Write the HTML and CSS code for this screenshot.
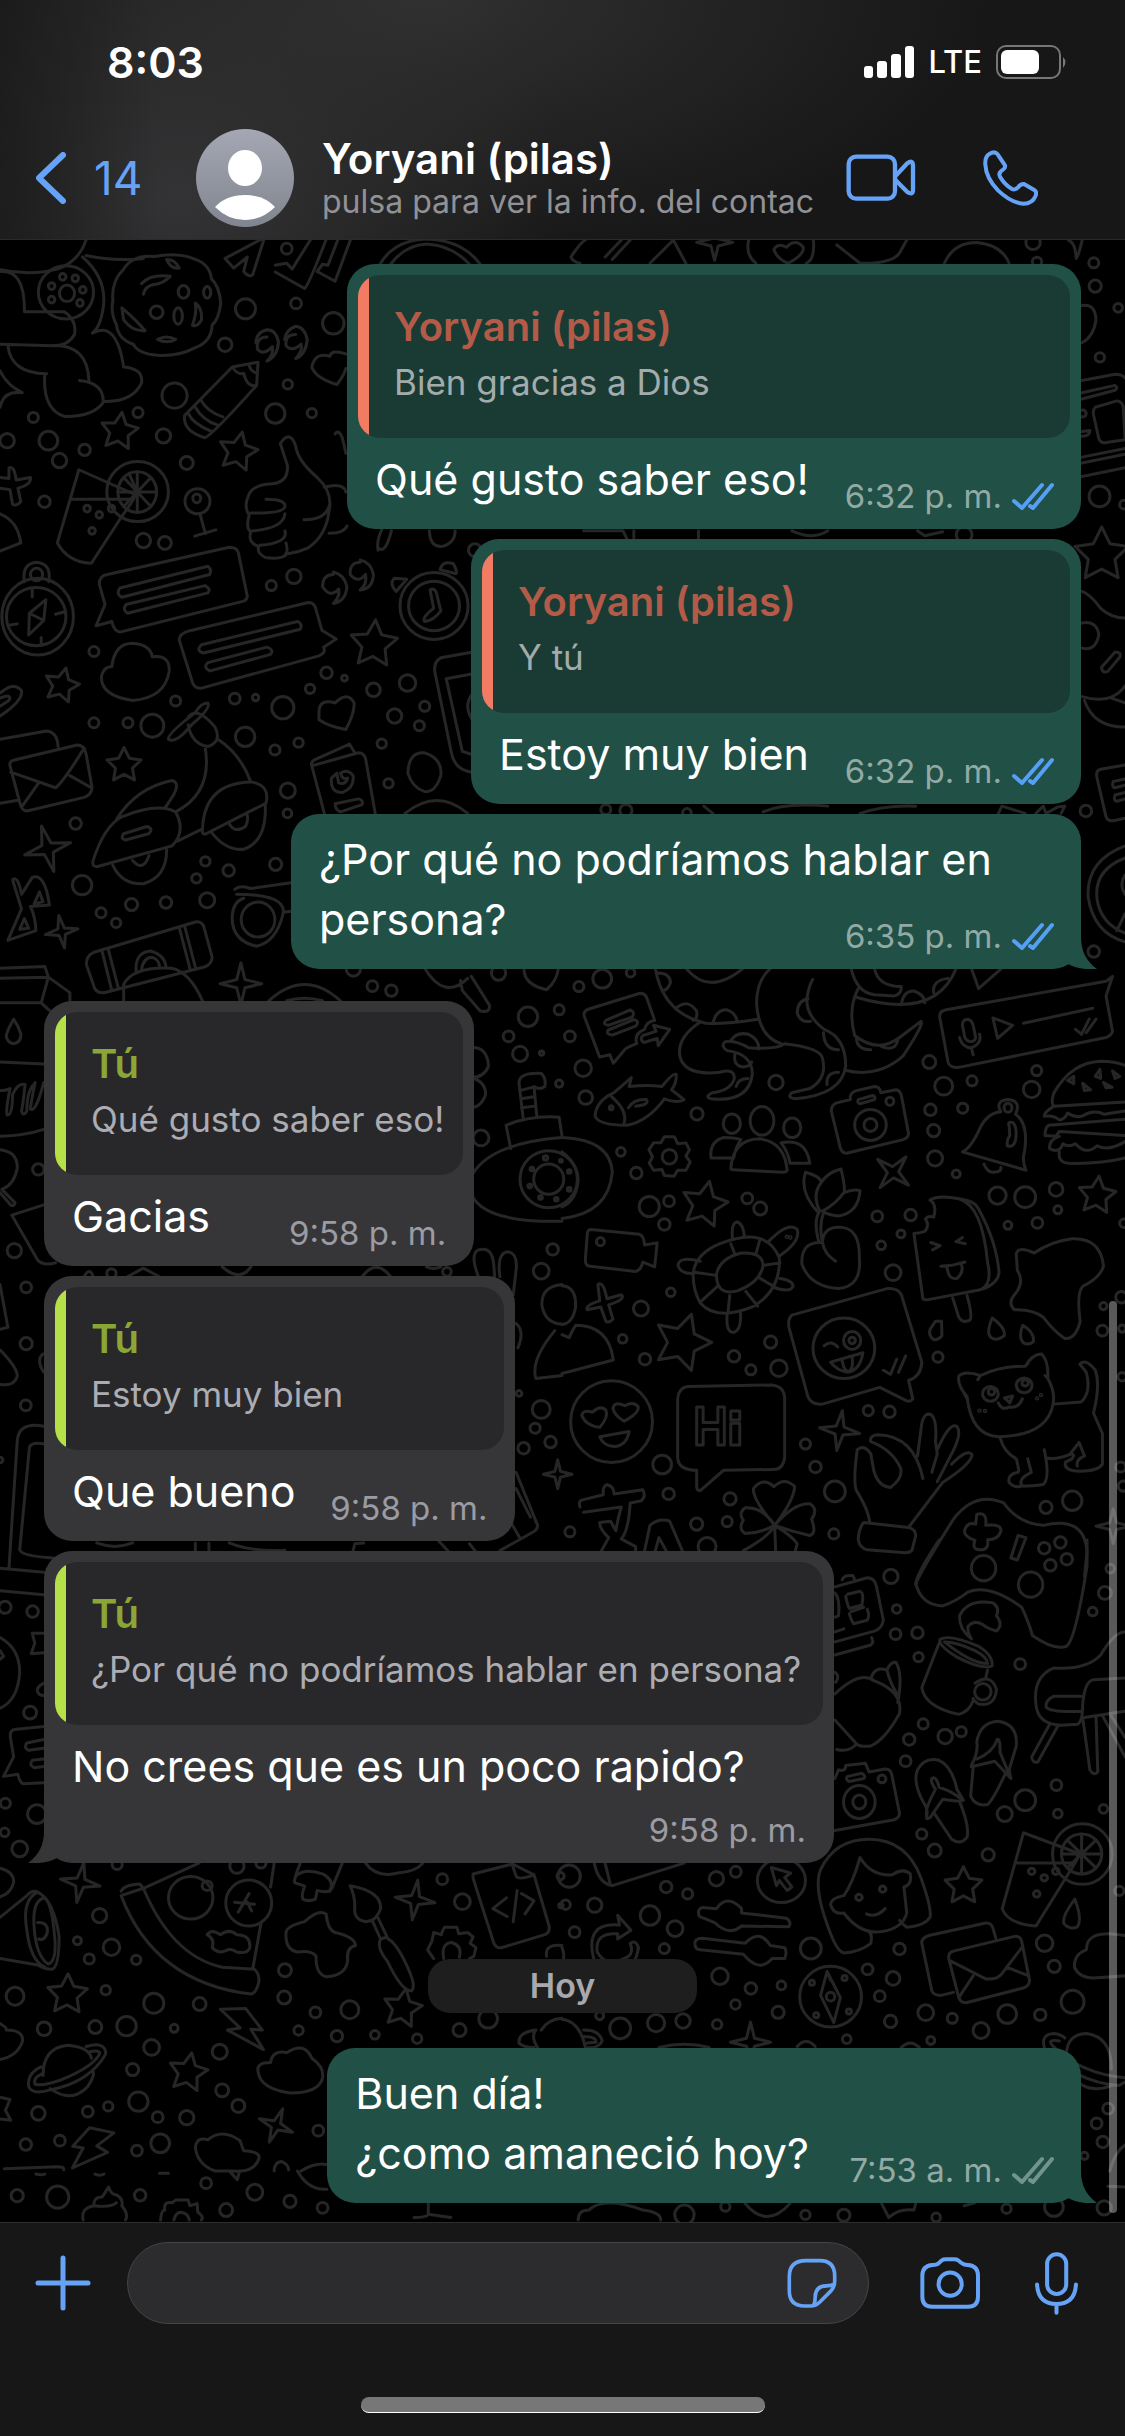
FILE: index.html
```html
<!DOCTYPE html>
<html lang="es">
<head>
<meta charset="utf-8">
<meta name="viewport" content="width=device-width, initial-scale=1">
<title>Chat</title>
<link rel="stylesheet" href="styles.css">
</head>
<body>
<svg class="defs" aria-hidden="true">
  <symbol id="ticks" viewBox="0 0 42 28"><path d="M2 19l8 7L30 3M18 24l3 2L40 3" fill="none" stroke="currentColor" stroke-width="4" stroke-linecap="round" stroke-linejoin="round"/></symbol>
  <symbol id="tail" viewBox="0 0 32 32"><path d="M0 0H16C16 14 21 24 32 32C20 33 10 31 3 27L0 20Z" fill="currentColor"/></symbol>
</svg>

<header class="top">
  <div class="status">
    <span class="clock">8:03</span>
    <div class="status-icons">
      <svg width="50" height="32" viewBox="0 0 50 32" fill="#fff"><rect y="20" width="9" height="12" rx="3"/><rect x="13" y="15" width="10" height="17" rx="3"/><rect x="27" y="8" width="10" height="24" rx="3"/><rect x="41" width="9" height="32" rx="3"/></svg>
      <span class="carrier">LTE</span>
      <svg width="72" height="34" viewBox="0 0 72 34"><rect x="1" y="1" width="63" height="32" rx="9" fill="none" stroke="#777" stroke-width="2"/><rect x="5" y="5" width="38" height="24" rx="6" fill="#fff"/><path d="M67 12q5 5 0 11z" fill="#777"/></svg>
    </div>
  </div>
  <nav class="nav">
    <button class="back" aria-label="Volver a chats">
      <svg width="30" height="52" viewBox="0 0 30 52"><path d="M27 3L3 26L27 49" fill="none" stroke="currentColor" stroke-width="6" stroke-linecap="round" stroke-linejoin="round"/></svg>
      <span>14</span>
    </button>
    <svg class="avatar" viewBox="0 0 98 98"><defs><linearGradient id="av" x2="0" y2="1"><stop stop-color="#a5a8b4"/><stop offset="1" stop-color="#81858f"/></linearGradient></defs><circle cx="49" cy="49" r="49" fill="url(#av)"/><ellipse cx="49" cy="39" rx="17" ry="18" fill="#fff"/><path d="M19 78Q30 66 49 66T79 78Q66 91 49 91T19 78Z" fill="#fff"/></svg>
    <div class="who">
      <h1 class="name">Yoryani (pilas)</h1>
      <p class="hint">pulsa para ver la info. del contac</p>
    </div>
    <div class="calls">
      <button aria-label="Videollamada"><svg width="70" height="48" viewBox="63 400 210 142" fill="none" stroke="currentColor" stroke-width="13" stroke-linejoin="round"><rect x="71" y="407" width="139" height="126" rx="22"/><path d="M212 464L247 427Q264 415 264 434V506Q264 524 247 513L212 478"/></svg></button>
      <button aria-label="Llamar"><svg width="55" height="56" viewBox="475 386 165 168" fill="none" stroke="currentColor" stroke-width="12" stroke-linejoin="round"><path d="M482 430Q480 406 494 398Q510 388 519 399L541 432Q543 440 535 445Q520 454 526 466Q540 490 562 503Q571 507 580 498Q588 487 598 488L630 507Q637 512 633 523Q623 547 597 547Q560 545 520 507Q484 470 482 430Z"/></svg></button>
    </div>
  </nav>
</header>

<main class="chat">
  <svg class="wallpaper" viewBox="0 240 1125 1982" preserveAspectRatio="xMidYMin slice" aria-hidden="true">
    <g transform="translate(0 240) scale(.3584 .4847)">
      <path d="M-5 60Q80 75 160 60Q220 45 240 0M240 32Q320 45 400 38M230 35Q300 80 288 140Q280 180 258 192M0 65Q70 60 68 148L180 148Q215 165 208 195Q190 218 150 218L0 215M22 218Q30 275 130 276M145 218Q245 215 248 290M222 290Q290 295 288 335Q260 365 180 364Q118 350 125 276M258 192Q325 165 345 262Q400 265 395 295Q370 335 290 333"/>
      <ellipse cx="184" cy="108" rx="77" ry="55"/><ellipse cx="187" cy="110" rx="21" ry="17"/><ellipse cx="144" cy="95" rx="9" ry="7"/><ellipse cx="175" cy="76" rx="9" ry="7"/><ellipse cx="210" cy="79" rx="9" ry="7"/><ellipse cx="231" cy="103" rx="9" ry="7"/><ellipse cx="223" cy="130" rx="9" ry="7"/><ellipse cx="144" cy="123" rx="9" ry="7"/>
      <path d="M345 60Q370 30 430 34Q500 25 545 40Q585 50 590 80Q612 95 616 130Q610 165 592 175Q590 210 545 222Q500 240 440 238Q385 235 372 215Q330 205 325 175Q308 150 315 125Q310 85 345 60ZM465 40Q490 40 500 58Q475 60 465 40ZM395 90Q420 70 475 75Q455 90 430 92Q405 95 400 112M340 140Q380 165 405 187Q370 190 345 165ZM545 130Q565 140 562 165Q550 180 537 176Q550 150 545 130ZM440 205Q465 195 490 205Q465 215 440 205Z"/>
      <ellipse cx="512" cy="107" rx="15" ry="13"/><ellipse cx="437" cy="149" rx="18" ry="13"/><ellipse cx="497" cy="157" rx="12" ry="17"/><ellipse cx="578" cy="108" rx="10" ry="12"/>
      <path d="M628 38L738 -5L705 72Q695 78 680 65L690 35L652 58ZM768 52L800 48L815 60L870 -5M768 66L850 100Q860 95 912 -5M885 65L935 85L980 -5M885 65L900 50L915 52L945 -5"/>
      <path d="M745 200Q715 200 718 225Q735 240 760 220Q765 235 745 250Q775 240 777 210Q770 185 745 185Q715 190 714 212M825 195Q795 195 798 218Q815 232 840 215Q845 230 825 245Q855 235 857 205Q850 180 825 178Q798 185 794 205"/>
      <path d="M965 235Q925 225 920 240Q880 230 870 262Q880 285 940 298Q960 280 965 265"/>
      <path d="M720 252L648 262L515 362Q510 395 572 408Q595 400 716 300ZM648 262Q665 280 680 275Q690 305 716 300M695 258Q700 272 718 275M560 330Q580 355 622 365M545 345Q565 372 608 382M525 358Q540 380 590 395"/>
      <path d="M220 474L160 625Q190 665 255 667L340 570Q395 515 370 523ZM200 535H370"/><ellipse cx="384" cy="519" rx="86" ry="62"/><ellipse cx="383" cy="520" rx="54" ry="42"/>
      <path d="M383 478V562M329 520H437M345 490L421 550M345 550L421 490M383 520L360 482"/><ellipse cx="243" cy="554" rx="9" ry="7"/><ellipse cx="277" cy="567" rx="9" ry="7"/><ellipse cx="311" cy="554" rx="9" ry="7"/><ellipse cx="257" cy="600" rx="9" ry="7"/>
      <ellipse cx="551" cy="539" rx="35" ry="26"/><ellipse cx="549" cy="533" rx="11" ry="9"/><path d="M558 565L573 606M543 611L602 598"/>
      <path d="M0 490L25 492L25 470Q40 465 45 495L85 490Q88 505 50 512L58 540Q45 550 35 545L28 515L0 512M0 565Q50 580 58 625L0 642M0 345Q10 310 62 315Q20 300 0 270"/>
      <path d="M782 420Q810 390 825 425Q830 455 885 490Q930 520 918 560Q910 610 860 635Q830 645 800 648Q790 660 740 655Q715 645 722 632Q690 625 700 602Q685 595 695 568Q680 550 692 530Q700 505 760 503Q805 500 802 465ZM742 535Q798 535 795 550Q790 565 700 563M795 565Q790 595 705 600M795 600Q805 625 725 630M798 625Q805 645 795 650M848 577Q910 578 920 545M905 510Q960 500 965 520M918 605Q960 605 968 590"/>
      <ellipse cx="105" cy="777" rx="100" ry="79"/><ellipse cx="101" cy="777" rx="83" ry="60"/><path d="M68 705Q60 668 102 665Q145 668 136 705"/><ellipse cx="102" cy="690" rx="17" ry="13"/><path d="M128 742L82 770L80 815L122 785ZM82 770L122 785M90 722V736M155 772L180 767M25 795L48 792M115 820V834"/>
      <path d="M300 690L640 634Q660 634 665 645L690 735Q690 742 680 745L340 808Q320 812 312 787L268 796L293 752L277 710Q277 692 300 690ZM335 718L580 673Q592 680 585 690L340 737Q322 730 335 718ZM352 752L572 713Q590 720 580 728L356 770Q340 763 352 752Z"/>
      <path d="M530 806L860 748Q875 748 880 758L898 805L938 823L903 840Q910 852 890 858L560 925Q545 925 538 915L500 825Q500 812 530 806ZM562 835L830 787Q845 792 838 803L568 852Q545 848 562 835ZM580 872L745 840Q765 845 755 855L586 889Q565 882 580 872Z"/>
      <path d="M312 880Q320 832 370 832Q420 835 425 860Q475 855 472 890Q460 945 370 950Q280 940 283 900Q290 880 312 880Z"/>
      <path d="M930 690Q900 690 900 715Q920 740 945 720Q950 735 930 750Q965 745 968 715Q960 690 930 685M1005 665Q975 665 977 690Q1000 710 1020 690Q1025 710 1005 722Q1040 720 1042 690Q1035 665 1005 660"/>
      <ellipse cx="1211" cy="755" rx="95" ry="69"/><ellipse cx="1211" cy="755" rx="71" ry="51"/><path d="M1200 722Q1215 715 1220 735L1230 765Q1210 785 1185 787Q1175 780 1210 760ZM1105 725Q1085 710 1100 698L1135 700ZM1228 680Q1235 660 1265 668Q1280 690 1270 688Z"/>
      <path d="M1320 850L1230 862Q1210 870 1213 890L1260 1060Q1270 1095 1320 1098M1320 895L1245 905L1290 1055L1320 1062M1320 935Q1290 960 1320 992M890 975Q890 945 935 955Q970 930 988 955Q990 975 965 1010Q920 1005 890 990Z"/>
      <path d="M0 935Q40 910 60 930Q65 950 0 982M0 945Q35 935 25 950L0 962M0 1030L130 1013Q160 1015 162 1045M0 1162L50 1156M40 1073L215 1042Q235 1042 240 1060L257 1130Q255 1145 235 1150L75 1178Q60 1178 55 1160L28 1085Q25 1075 40 1073ZM30 1098L155 1130Q175 1120 235 1048M60 1170L108 1120M255 1130L195 1105"/>
      <path d="M470 1030Q465 1020 545 975Q560 955 580 955Q590 965 535 1000Q490 1040 470 1030ZM525 985Q550 960 600 1005Q620 1035 580 1045Q535 1040 525 1000M572 1045Q595 1140 490 1180M608 1030Q670 1060 698 1115M325 1195Q380 1130 480 1115Q505 1120 480 1150L460 1172M260 1280Q290 1210 340 1190Q440 1160 490 1180Q520 1220 480 1250L275 1292Q255 1295 260 1280ZM345 1225L410 1210Q430 1215 415 1225L350 1238Q335 1235 345 1225ZM495 1240L565 1215Q570 1120 700 1118Q755 1125 742 1162L575 1225Q562 1228 565 1215M590 1222Q630 1260 680 1257Q745 1240 740 1165M640 1205Q655 1225 685 1210Q695 1195 688 1182M315 1290Q340 1330 400 1328Q465 1315 465 1258M370 1280Q400 1305 416 1270"/>
      <path d="M905 1183L870 1085Q865 1075 885 1070L975 1040L990 1058M870 1085L1000 1058Q1015 1058 1020 1070L1047 1183M935 1163L1000 1153Q1015 1155 1010 1165L950 1180Q935 1175 935 1163ZM925 1110Q920 1140 955 1140Q990 1130 985 1105Q970 1090 950 1100Q955 1115 970 1110Q965 1125 945 1120L940 1100ZM1138 1100Q1140 1055 1185 1058Q1235 1070 1230 1105Q1215 1140 1185 1138Q1150 1130 1138 1100ZM1130 1183Q1220 1130 1305 1183"/>
      <path d="M35 1320Q50 1310 60 1350L90 1315Q125 1305 138 1372L85 1375Q100 1400 100 1425L22 1445L60 1380ZM95 1370L110 1345L120 1365ZM55 1422L68 1400L80 1420Z"/>
      <path d="M655 1340Q670 1330 700 1338L812 1326M660 1350Q800 1350 790 1390Q770 1450 715 1457Q645 1445 648 1395Q650 1365 680 1358M790 1387L812 1385"/><ellipse cx="720" cy="1402" rx="47" ry="36"/>
      <path d="M260 1470L545 1407Q565 1405 570 1420L592 1480Q590 1495 570 1500L290 1553Q265 1555 260 1535L241 1495Q240 1478 260 1470ZM285 1468L312 1548M302 1463L330 1543M500 1418L530 1503M515 1415L545 1500M380 1510Q375 1470 420 1467Q460 1475 463 1500M395 1505Q400 1480 425 1480Q445 1485 445 1500"/>
      <path d="M1060 50Q1100 0 1190 -2Q1290 0 1340 50M1090 50Q1130 10 1190 8Q1260 10 1310 50M935 400Q945 390 955 408L965 440M1055 640Q1050 620 1065 598M1055 635Q1075 650 1092 600M1198 600Q1200 635 1235 632Q1270 625 1270 600"/>
    </g>
    <g transform="translate(562 240) scale(.3591 .4847)">
      <path d="M25 35Q60 -5 80 -5M25 35Q30 45 50 48M120 35L165 0M140 40L190 0M245 48L310 0L345 48M520 0Q510 30 540 48M590 20Q600 5 625 15Q650 -5 672 15Q675 30 630 48Q600 40 590 20ZM700 0Q705 40 680 48M765 10L830 48Q930 50 945 20L960 0M1065 48Q1090 5 1155 5Q1225 10 1245 48M1410 0Q1430 5 1432 38Q1440 30 1450 -5M1448 135Q1485 130 1487 165Q1480 200 1448 212M1448 290L1540 277Q1560 277 1568 285M1448 315L1540 300Q1550 305 1540 310L1448 328M1485 345L1545 332Q1560 332 1563 345L1568 410M1485 345Q1478 350 1480 360L1495 410Q1500 420 1515 418L1568 412M1448 448L1568 430M1448 460L1568 442M1448 488L1568 470M1448 395L1470 393Q1470 405 1448 405"/>
      <path d="M1448 725Q1470 730 1500 760Q1530 780 1568 780M1448 790Q1490 785 1495 815Q1485 850 1448 842M1502 882L1540 850Q1560 850 1552 862L1520 890Q1505 895 1502 882ZM1448 942Q1530 960 1568 920M1455 950Q1480 1005 1568 1005M1530 945L1568 955M1568 1083L1500 1092Q1485 1095 1490 1110L1515 1190Q1520 1200 1535 1198L1568 1193M1568 1112L1535 1117Q1530 1130 1540 1130L1568 1125M1568 1140L1540 1145Q1535 1158 1545 1158L1568 1153M1568 1250Q1460 1280 1465 1355Q1480 1430 1568 1448M1568 1275Q1480 1300 1490 1360Q1500 1410 1568 1430M1568 1310Q1550 1330 1568 1350M1545 1425L1568 1390"/>
      <path d="M395 1168L420 1183M560 1180Q620 1160 740 1168M830 1183Q900 1165 985 1168M1215 1183L1225 1168L1290 1183M1320 1183L1340 1168L1348 1183L1380 1170L1400 1168L1390 1183M60 600H170L180 615M200 600V615M380 600V615M640 600Q700 620 740 600M990 600L1010 610L1060 602"/>
    </g>
    <g transform="translate(0 960) scale(.3584 .4082)">
      <path d="M345 100V60Q370 15 480 20Q530 30 565 100M750 100Q850 20 950 100M800 100Q850 88 900 100M0 20L125 16L135 42L195 80V102M0 45L135 42L115 105L140 125M0 105H115M0 250L122 255M0 320Q20 320 28 315Q15 370 20 380Q35 380 35 330Q50 300 70 305Q65 350 60 370Q65 385 75 370Q75 320 95 305L98 300Q85 355 85 365Q100 375 122 300M0 432Q70 430 122 415M38 145Q15 180 18 190Q25 205 40 205Q60 200 58 180Q50 160 38 145ZM0 465Q50 470 48 510Q40 550 5 562L42 595Q38 605 30 600L0 570M122 600L33 625L105 735Q120 750 155 742"/>
      <path d="M1185 20Q1240 100 1305 45M1285 50L1290 75L1340 125Q1370 130 1365 110L1315 40M1462 20Q1460 60 1525 73Q1555 50 1558 20M1310 215Q1360 210 1363 260Q1350 290 1310 288Q1355 295 1355 330Q1340 365 1310 360M1448 300Q1450 275 1510 278Q1525 290 1520 310Q1505 320 1490 310L1498 385M1448 300L1460 390M1450 320L1485 312M1453 340L1490 335M1455 362L1492 358M1425 462L1412 405Q1480 380 1560 385L1568 430M1310 540Q1350 450 1568 435M1310 560Q1330 645 1568 640"/><ellipse cx="1531" cy="537" rx="80" ry="70"/><ellipse cx="1531" cy="537" rx="42" ry="37"/>
      <path d="M1335 776Q1310 720 1335 710Q1375 700 1378 750L1380 776M1395 776Q1385 715 1420 715Q1445 720 1440 760L1432 820M1568 795Q1510 800 1512 845Q1520 890 1568 892M1548 908Q1480 980 1495 1025L1568 1018M1440 890Q1465 910 1445 950M1440 1255L1500 1385Q1500 1395 1490 1400L1395 1447M1440 1295L1480 1365M1420 1370L1450 1415M235 776Q250 750 260 776M355 776L400 755L445 776M620 752Q670 790 700 752M1010 776Q1050 730 1090 776M1190 752Q1210 760 1230 752M0 795L22 900L0 905M0 955Q50 1000 48 1020Q40 1045 0 1040M120 965Q100 980 122 1010M122 1142Q50 1130 48 1180L25 1490M122 1185Q85 1180 82 1195L55 1445Q60 1460 150 1465M0 1490L122 1500M0 1545L122 1555M270 1428Q320 1445 370 1428M545 1448V1428M583 1448V1428M640 1428Q700 1450 795 1446M985 1448L990 1430L1015 1428M1210 1410L1250 1448M1310 1430L1325 1447"/>
    </g>
    <g transform="translate(562 960) scale(.3591 .4082)">
      <path d="M0 435Q135 440 140 520Q130 620 0 633M0 470Q45 500 45 540Q40 590 0 605"/>
      <path d="M62 138Q58 125 75 120L215 82Q232 80 237 95L258 148Q235 150 230 170Q200 180 208 205Q175 215 170 225L143 253L133 232L105 238ZM122 148L190 122Q205 128 195 140L128 160Q112 158 122 148ZM128 172L200 146Q218 150 205 162L140 184Q122 182 128 172ZM225 185L262 175L255 160L300 170L268 210L265 192L228 202Q215 195 225 185Z"/>
      <path d="M260 20Q280 130 400 155Q450 158 545 145M345 20Q410 90 505 20M262 32Q300 30 302 55Q295 75 278 75M322 115Q350 95 375 125Q378 145 365 148M420 155Q430 120 460 122Q485 130 488 152M582 20Q540 50 542 110Q550 190 610 205M385 152Q320 190 328 235Q340 285 440 275Q480 265 480 290Q470 320 420 325Q395 335 415 340Q520 350 530 280Q530 230 460 222Q440 210 455 200Q480 195 520 215Q600 220 620 205Q720 215 725 240Q740 290 690 315L640 325Q625 338 650 340Q780 330 790 260Q790 190 730 170Q670 130 685 80Q690 60 698 48M685 95Q655 100 655 130Q665 155 692 150M470 198Q485 175 520 182Q550 195 548 218M482 228Q475 260 505 262Q525 260 528 250M485 310Q490 290 518 290M728 178Q730 220 770 220M770 275Q735 275 738 305M805 20Q820 80 870 85L925 88Q945 85 945 65Q880 65 870 20M825 70Q795 120 815 185Q880 230 940 190L1000 150Q1010 155 950 235Q880 290 788 270M815 90Q1040 150 1098 20M820 190Q820 220 860 220M890 212Q930 225 935 195M945 110Q950 75 980 76Q1010 85 1010 105M1035 80Q1030 50 1075 45M1140 20L1160 70L1225 20"/>
      <path d="M1070 122L1515 52L1533 40L1515 88L1533 175Q1530 185 1515 190L1105 263Q1080 265 1075 250L1052 140Q1050 125 1070 122ZM1115 160Q1115 145 1130 145Q1142 148 1145 160L1152 190Q1150 200 1138 200Q1125 198 1122 190ZM1107 190Q1115 215 1140 215Q1170 205 1163 182M1140 215L1145 232M1200 142L1255 160L1213 192ZM1285 155L1478 118M1430 170L1447 182L1468 145M1460 178L1487 145"/>
      <path d="M92 382Q95 345 145 325L193 288L187 310Q240 305 278 310Q310 275 318 280Q320 300 305 318L340 342Q320 352 285 340Q240 395 180 405Q100 405 92 382ZM138 335Q185 370 172 403M185 362Q200 340 235 342Q245 355 205 358"/><circle cx="137" cy="362" r="5"/>
      <path d="M275 448L285 433L313 433L322 450L345 448L355 465L345 480L357 495L345 515L322 515L312 530L285 528L278 513L255 515L243 498L252 482L242 465L255 448ZM415 485Q410 445 450 435Q480 435 498 440Q485 455 478 485ZM470 512Q475 440 550 438Q620 445 627 515Q625 520 615 520L475 514ZM610 448Q680 435 690 498L635 498Q630 470 610 448Z"/><ellipse cx="299" cy="482" rx="20" ry="18"/><ellipse cx="473" cy="401" rx="24" ry="24"/><ellipse cx="557" cy="394" rx="33" ry="35"/><ellipse cx="641" cy="411" rx="24" ry="24"/>
      <path d="M765 350L803 342Q800 325 820 320L870 310Q885 310 888 325L930 318Q942 320 945 332L965 425Q965 435 950 440L795 473Q780 475 775 460L750 370Q750 355 765 350ZM825 342L865 332Q875 335 870 342L830 352Q820 350 825 342Z"/><ellipse cx="859" cy="404" rx="44" ry="38"/><ellipse cx="859" cy="404" rx="18" ry="16"/><ellipse cx="913" cy="346" rx="11" ry="10"/>
      <path d="M1222 372Q1205 345 1242 342Q1280 345 1263 378Q1300 400 1288 470Q1280 490 1292 515L1115 470Q1140 460 1165 410Q1185 375 1222 372ZM1175 500Q1185 520 1200 520Q1225 520 1222 508M1245 405Q1240 395 1255 398Q1270 410 1262 445Q1255 460 1240 455Q1238 440 1247 430Z"/><ellipse cx="1242" cy="362" rx="11" ry="11"/>
      <path d="M1568 348L1370 358Q1360 350 1370 325Q1420 250 1500 248Q1540 248 1568 258M1370 358Q1340 375 1343 383Q1370 380 1385 392Q1400 390 1408 375Q1430 388 1450 382Q1480 365 1510 378L1568 370M1355 405L1568 390M1355 405Q1345 410 1345 430L1375 432L1385 420L1568 430M1385 432Q1355 440 1358 462Q1385 475 1395 450Q1410 460 1430 450Q1460 480 1490 455Q1520 470 1568 445M1385 470Q1380 495 1410 498Q1500 500 1568 485M1408 295L1425 285V303ZM1450 302L1472 318L1455 320ZM1485 285L1498 268L1500 290ZM1508 300L1532 312L1515 313ZM1533 272L1553 285L1540 290Z"/>
      <path d="M715 620Q660 570 678 520Q720 530 722 545Q740 520 777 512Q790 560 785 570Q810 560 830 565Q825 620 770 627Q740 625 725 615Q760 600 785 570M722 545Q695 575 718 615M715 620Q700 640 715 690M728 620Q715 650 725 690M762 738Q730 720 725 690Q730 650 780 655Q830 660 828 730Q835 800 770 805Q690 800 668 745Q665 690 722 692"/>
      <path d="M980 670L1005 830Q1005 833 1020 832L1165 808Q1200 795 1185 740Q1170 600 1105 585Q1050 575 1025 588Q1045 600 1035 630Q1020 625 1012 635Q1025 650 1010 665Q995 670 980 670ZM1105 585Q1150 590 1160 610Q1210 690 1217 765Q1215 790 1175 805M1088 828L1105 875Q1115 890 1135 883Q1145 875 1128 822M1027 692L1053 700L1032 710M1115 680L1097 690L1123 695M1055 750L1085 748L1122 740M1072 750Q1075 785 1100 780Q1120 765 1112 745"/>
      <path d="M80 660L215 672Q228 675 230 698L265 693L258 752L225 740Q220 760 205 763L78 750Q65 750 65 735L70 675Q70 660 80 660Z"/><ellipse cx="107" cy="690" rx="11" ry="10"/>
      <path d="M365 770Q370 720 440 695Q570 650 605 730Q610 810 530 850Q430 885 385 840Q365 810 365 770ZM430 770Q440 730 500 718Q560 715 560 750Q550 790 490 810Q430 825 430 770ZM470 695L482 722M550 688L540 720M562 748L607 742M552 780L600 805M512 812L545 848M467 822L462 865M432 800L385 838M425 772L368 765M475 685Q470 645 487 642Q505 645 508 680M575 690Q630 640 655 660Q665 690 605 725M385 738Q325 725 323 748Q330 770 368 768M607 780Q645 785 643 800Q635 815 592 803M460 867Q455 915 480 912Q500 905 497 865"/>
      <path d="M100 795Q115 785 125 830L165 820Q180 830 130 845L142 880Q130 890 122 885L108 850L70 857Q65 845 105 835ZM0 798Q40 800 38 850Q30 890 0 893M0 918L20 925Q30 905 38 895Q130 895 143 980L0 1013"/>
      <path d="M640 870L905 805Q935 803 945 820L1002 985Q1000 1020 965 1030L977 1075Q970 1083 960 1080L885 1047L725 1088Q695 1090 685 1070L632 900Q628 880 640 870ZM730 945Q750 930 768 948M748 985L838 962Q830 1005 795 1010Q765 1005 748 985ZM780 980Q785 1010 800 1008Q812 1000 808 972M895 1005L915 1015L932 978M937 1010L957 970"/><ellipse cx="785" cy="951" rx="86" ry="74"/><ellipse cx="808" cy="932" rx="24" ry="22"/><ellipse cx="808" cy="932" rx="9" ry="8"/>
      <ellipse cx="138" cy="1131" rx="114" ry="100"/><path d="M55 1115Q60 1100 85 1108Q105 1090 122 1102Q130 1120 105 1145Q65 1140 55 1115ZM142 1098Q145 1080 175 1092Q200 1080 212 1095Q215 1110 173 1130Q145 1115 142 1098ZM105 1168L187 1155Q180 1190 145 1192Q115 1190 105 1168Z"/>
      <path d="M350 1045L585 1041Q620 1045 620 1075V1220Q615 1248 590 1248L450 1250L385 1300Q375 1300 375 1290V1250Q325 1250 322 1220V1075Q325 1048 350 1045ZM375 1095H393V1133H434V1095H452V1188H434V1150H393V1188H375ZM470 1105H495V1127H470ZM470 1135H495V1188H470Z"/>
      <path d="M1105 1020Q1120 1005 1165 1018Q1220 995 1290 995Q1310 965 1335 965Q1355 980 1353 1025Q1375 1060 1367 1090Q1350 1165 1215 1168Q1140 1165 1128 1070Q1100 1040 1105 1020ZM1165 1018L1158 1028M1290 995L1298 988M1353 1025L1345 1018M1128 1075L1122 1065M1215 1085Q1225 1105 1245 1095Q1270 1100 1282 1075M1232 1073L1255 1068L1247 1085ZM1370 1088L1445 1083Q1475 1060 1460 1010L1442 990Q1460 975 1485 1005Q1500 1040 1480 1110L1505 1160V1235Q1495 1250 1455 1252Q1395 1255 1402 1230L1420 1222Q1430 1210 1418 1210Q1380 1225 1348 1220M1440 1182L1455 1215Q1430 1225 1435 1240M1440 1182L1415 1210M1343 1200Q1360 1270 1340 1285Q1310 1290 1280 1288Q1270 1270 1307 1255L1297 1222M1220 1170Q1230 1205 1265 1222Q1275 1255 1270 1255Q1240 1260 1245 1280Q1260 1295 1283 1288"/><ellipse cx="1193" cy="1063" rx="22" ry="18"/><ellipse cx="1287" cy="1042" rx="22" ry="18"/>
      <path d="M857 1380Q855 1350 820 1300Q810 1280 822 1200Q840 1185 860 1210L868 1250Q880 1290 915 1292Q950 1270 943 1245Q920 1200 860 1180Q855 1165 880 1163Q980 1165 1005 1270M990 1215L1002 1135Q1010 1105 1030 1115Q1045 1130 1040 1180L1045 1210L1030 1255M1045 1200Q1080 1130 1100 1143Q1115 1160 1085 1210L1045 1278M1085 1235Q1130 1195 1142 1212Q1140 1235 1060 1280L965 1390M840 1378L965 1390Q985 1395 985 1410L975 1445Q970 1452 955 1452L850 1445Q828 1440 825 1420Q825 1395 840 1378Z"/>
      <path d="M592 1385Q530 1320 533 1295Q560 1265 590 1290Q620 1265 648 1290Q645 1325 592 1385ZM592 1385Q645 1330 690 1332Q715 1345 695 1370Q710 1405 690 1410Q640 1400 592 1385ZM592 1385Q560 1340 510 1342Q490 1355 505 1372Q490 1395 510 1405Q550 1405 592 1385ZM592 1385Q580 1410 505 1447M592 1385L595 1447M592 1385Q640 1410 655 1430L650 1447"/>
      <path d="M50 1340Q45 1322 60 1322L115 1310Q112 1290 125 1285Q145 1290 145 1308L225 1298Q235 1315 220 1325L190 1330Q185 1400 165 1418L205 1437L205 1447M165 1340L60 1353M165 1340Q155 1370 150 1398L135 1375L105 1378Q105 1395 130 1415L110 1447M230 1447L245 1385Q270 1365 300 1375L335 1447M260 1447L270 1415L290 1447"/>
      <path d="M1040 885L1057 885L1058 920Q1050 930 1035 930Q1020 920 1025 905ZM1198 877Q1180 915 1195 925Q1210 935 1232 920Q1235 900 1198 877ZM1283 895Q1270 925 1285 938Q1300 945 1313 935Q1315 910 1283 895Z"/>
      <path d="M1265 720Q1270 700 1315 718Q1360 690 1420 683Q1500 680 1508 750Q1500 775 1460 795Q1430 800 1443 885Q1430 930 1400 927Q1370 910 1340 875Q1310 855 1260 857Q1240 840 1260 820Q1290 790 1268 760Z"/>
      <path d="M985 1530Q990 1510 1090 1370Q1150 1300 1230 1330Q1270 1380 1340 1385Q1455 1360 1462 1450L1455 1510M1155 1358Q1185 1350 1180 1385Q1225 1380 1222 1400Q1215 1420 1185 1420Q1190 1445 1165 1445Q1140 1445 1150 1422Q1115 1410 1122 1395Q1130 1375 1152 1382ZM1270 1410L1292 1415L1268 1470L1250 1465Z"/>
    </g>
    <g transform="translate(0 1540) scale(.3584 .4337)">
      <path d="M0 225Q55 250 55 305Q50 370 0 388M0 255L10 268L0 275M122 215L90 215L97 238L87 262L122 260M122 430L40 437Q25 440 30 460L38 500L10 545L50 540Q55 560 65 562L122 560M122 460L75 468Q65 480 80 485L122 480M122 505L90 508Q80 520 95 525L122 522M122 330Q100 340 105 350Q110 360 122 358M0 757Q40 765 38 790Q30 815 0 823M0 870L75 820Q90 805 105 812Q150 830 165 915Q165 985 145 990Q125 990 105 980L0 965M105 812Q60 830 75 900Q85 970 125 985M125 825Q90 830 95 890Q100 960 135 978Q160 970 152 910Q145 840 125 825ZM105 882Q135 880 132 905Q125 925 108 920"/>
      <path d="M338 810Q345 795 390 793L400 803L555 745M765 745L755 800M728 885L705 990M400 803Q480 960 620 985L710 990Q725 1000 722 1020Q715 1045 700 1047Q430 1020 338 820ZM578 910Q590 895 615 910Q640 895 660 910Q700 910 697 940Q690 955 660 950Q645 940 630 947Q610 955 592 940Q600 920 578 910ZM655 835L710 840M695 815L665 858M690 835L702 855"/><ellipse cx="532" cy="825" rx="62" ry="49"/><ellipse cx="694" cy="837" rx="64" ry="53"/><ellipse cx="578" cy="797" rx="14" ry="11"/>
      <path d="M838 745Q820 780 822 790L850 798Q840 820 845 828Q860 835 880 828L885 808Q915 815 925 805L955 745M825 775Q850 755 900 770Q935 785 920 810M1020 745Q1050 780 1110 768Q1160 765 1180 745"/>
      <path d="M798 905Q800 890 850 880Q890 850 910 863Q915 900 935 905Q990 915 992 935Q965 940 970 970Q965 1005 910 1007Q880 1000 882 960Q870 945 830 950Q795 945 798 905ZM977 797Q1065 810 1062 850Q1050 880 1020 880Q985 875 990 845Q990 820 977 797ZM1040 880L1062 920L1080 915L1055 872M1062 920Q1050 940 1080 970Q1120 1040 1148 1040Q1160 1030 1145 1000Q1110 930 1080 918"/>
      <path d="M1320 770L1430 747L1490 772L1532 890Q1535 905 1520 910L1400 940Q1385 942 1378 930L1320 780ZM1428 745L1440 775Q1445 785 1490 772M1413 825L1375 850L1415 868M1443 808L1432 880M1455 815L1490 832L1465 862"/>
      <path d="M1230 910L1240 893L1275 893L1280 908L1305 905L1320 915L1312 930L1328 940L1322 960L1310 965M1210 965L1193 945L1205 925L1210 905L1232 910M1238 965Q1230 930 1260 928Q1290 935 1282 962"/>
      <path d="M615 1082L685 1080L732 1130L700 1128L735 1175L635 1130L670 1125ZM250 1355L318 1367L270 1397L300 1412L202 1448L232 1402L203 1398Z"/>
      <path d="M720 1225Q715 1205 755 1205Q760 1175 800 1182Q850 1155 870 1195Q905 1215 900 1240Q890 1275 810 1275Q725 1265 720 1225ZM545 1400Q550 1375 580 1383Q620 1355 670 1385Q680 1410 680 1408Q725 1410 723 1425Q710 1460 650 1455L600 1455Q550 1440 545 1400ZM640 1455L662 1475L668 1457M0 1115Q20 1125 18 1130Q65 1130 63 1155Q50 1190 0 1198"/>
      <path d="M120 1235Q120 1170 190 1165Q250 1170 255 1195M140 1265Q200 1300 245 1260Q265 1235 260 1225M115 1215Q75 1230 80 1260Q90 1280 140 1268Q250 1250 295 1185Q295 1155 240 1168M120 1230Q90 1240 98 1255Q120 1260 170 1245Q260 1215 278 1185Q280 1175 250 1180"/>
      <path d="M12 1450L160 1445Q180 1445 178 1452M0 1285L28 1290L15 1315L30 1338L0 1335M100 1462Q115 1465 125 1462M265 1462Q280 1467 290 1462M445 1460H470M765 1455Q765 1435 785 1433Q805 1440 805 1452M830 1455Q860 1500 912 1497M840 1455Q880 1435 910 1440"/>
      <path d="M232 1568Q225 1540 262 1535Q260 1515 285 1515L303 1492Q310 1510 325 1510Q345 1520 340 1535Q360 1555 350 1568M262 1535Q310 1540 325 1528M448 1568Q450 1545 460 1545Q455 1525 480 1528L490 1522L525 1522L530 1535L550 1530L552 1550Q570 1560 562 1568M485 1568Q490 1550 505 1550Q525 1552 528 1568M1195 1528V1555Q1190 1562 1155 1562M1200 1555L1258 1562M1448 1160Q1445 1135 1495 1130M1448 1160Q1460 1170 1490 1170M1495 1130Q1480 1145 1500 1170M1510 1130Q1530 1105 1568 1103M1568 935Q1520 930 1525 960"/>
    </g>
    <g transform="translate(562 1540) scale(.3591 .4337)">
      <path d="M760 108L850 87Q870 87 875 105L895 185Q890 205 870 210L760 235M780 92Q785 80 810 82L815 92M760 265L860 242Q870 235 862 225M760 122Q775 135 770 175L760 178M760 212L785 205M795 125L830 118M790 130Q795 150 800 158L835 150Q840 130 835 122M805 165L840 155M800 170Q805 185 812 193L850 185Q858 175 850 160"/>
      <path d="M760 355Q830 300 870 325Q950 350 940 400Q900 460 860 475Q830 478 820 470L760 415M820 470Q800 490 765 483M860 320Q870 290 905 300Q915 280 930 282Q950 310 935 375M905 300Q915 335 938 360M760 305Q775 315 762 328"/>
      <path d="M760 550L770 530Q790 535 790 520L845 515L855 535L900 528Q915 528 918 540L940 630Q940 640 925 645L760 670M795 545L835 538Q848 545 840 550L800 557Q788 552 795 545Z"/><ellipse cx="828" cy="604" rx="44" ry="38"/><ellipse cx="828" cy="604" rx="18" ry="16"/><ellipse cx="891" cy="551" rx="11" ry="9"/>
      <path d="M1050 238L1002 340Q1010 385 1105 402Q1135 395 1145 370M1185 300L1180 318M1052 230Q1075 215 1160 245Q1200 265 1198 290Q1170 300 1100 270Q1050 245 1052 230ZM1065 235Q1100 235 1150 255Q1185 270 1185 285Q1140 285 1065 235ZM1140 228Q1105 205 1107 175Q1130 135 1200 145Q1220 155 1210 175Q1230 195 1210 210Q1190 205 1180 200Q1150 180 1130 200Q1130 215 1140 228ZM1150 330Q1195 305 1210 345Q1205 385 1160 378Q1145 370 1145 365"/><ellipse cx="1172" cy="350" rx="23" ry="19"/>
      <path d="M985 100Q990 75 1050 0M985 100Q1000 150 1060 152Q1100 140 1130 120Q1190 100 1280 155Q1300 190 1310 220Q1370 255 1405 245Q1430 230 1462 60V0"/><ellipse cx="1174" cy="65" rx="34" ry="29"/><ellipse cx="1305" cy="103" rx="34" ry="29"/>
      <path d="M1568 212Q1540 210 1500 265Q1460 300 1370 295Q1310 315 1320 380Q1325 425 1390 427L1435 425Q1450 420 1450 380Q1455 325 1480 322L1568 318M1445 360H1370Q1345 370 1348 385Q1360 398 1445 395M1450 410L1568 395M1358 425L1308 500Q1310 515 1325 512L1380 430M1450 410L1470 530Q1480 545 1492 535L1487 405M1505 405L1568 500M1525 400L1568 455"/>
      <path d="M1015 640Q1020 620 1010 610Q975 560 990 530Q1010 500 1050 508Q1085 520 1100 575L1118 600Q1110 605 1060 598L1025 640Q1015 645 1015 640ZM1015 635Q1010 620 1040 575Q1020 550 1035 548Q1045 550 1050 570Q1090 580 1115 600M1035 628L1085 690Q1110 705 1128 685Q1135 660 1108 605M1140 520Q1160 490 1155 465Q1165 420 1215 418Q1270 425 1265 475L1245 530L1250 550L1205 510L1140 523Q1140 515 1140 520ZM1155 505Q1200 490 1212 460Q1220 455 1220 490L1245 540M1145 525L1138 590Q1150 615 1185 610Q1200 600 1235 538"/>
      <path d="M830 732Q810 790 785 820Q750 825 748 840Q755 865 785 860Q830 910 890 903Q950 895 960 860Q955 820 952 800Q975 795 970 770Q950 755 920 772Q860 775 830 732ZM785 952Q830 950 860 930Q865 910 855 903M785 952Q765 950 740 890Q700 800 720 760Q760 690 855 690Q960 690 1000 780Q1030 850 1025 870Q1010 890 960 893Q940 880 940 877M848 862Q875 872 900 850"/><ellipse cx="827" cy="824" rx="9" ry="7"/><ellipse cx="893" cy="805" rx="9" ry="7"/>
      <path d="M1285 675L1226 850Q1240 885 1320 890L1432 740Q1440 725 1430 720ZM1262 745H1428"/><ellipse cx="1449" cy="724" rx="83" ry="70"/><ellipse cx="1447" cy="724" rx="56" ry="46"/><path d="M1447 678V770M1391 724H1503M1407 692L1487 756M1407 756L1487 692"/><ellipse cx="1308" cy="764" rx="9" ry="7"/><ellipse cx="1343" cy="779" rx="9" ry="7"/><ellipse cx="1375" cy="764" rx="9" ry="7"/><ellipse cx="1322" cy="816" rx="9" ry="7"/>
      <path d="M1428 828Q1390 870 1398 885Q1415 900 1435 892Q1450 875 1428 828ZM1022 912L1180 883Q1195 882 1200 895L1208 918M1022 912Q1000 918 1002 930L1030 1040Q1035 1050 1055 1050L1090 1043M1090 948L1260 914Q1275 912 1280 925L1302 1015Q1302 1028 1285 1033L1125 1067Q1110 1067 1105 1055L1077 965Q1075 950 1090 948ZM1080 970L1180 1012Q1210 1015 1225 1000L1280 940M1105 1055L1145 1005M1300 1005L1238 985M1568 912Q1460 895 1460 945Q1425 955 1427 985Q1440 1010 1480 1010L1568 1005"/>
      <ellipse cx="748" cy="1053" rx="86" ry="70"/><path d="M738 995L720 1050L757 1113L775 1055ZM738 995L748 1015"/>
      <path d="M1405 1180Q1410 1140 1460 1138Q1530 1145 1530 1220M1345 1175Q1330 1140 1370 1138Q1390 1140 1400 1148M1345 1175Q1430 1250 1550 1258L1568 1250M1365 1165Q1350 1150 1385 1155M1365 1165Q1440 1230 1568 1240M1420 1235Q1460 1280 1530 1258"/>
      <path d="M380 860Q380 845 400 848L430 850Q460 815 500 850L500 860L625 872Q640 880 632 892L500 890Q465 915 425 882L395 872Q380 870 380 860ZM370 930Q370 918 390 918L510 930Q550 895 580 935L620 940Q628 950 620 965L585 965Q550 1000 505 955L385 945Q370 945 370 930Z"/>
      <path d="M90 745Q100 790 140 797L340 745M120 745L135 795M90 970Q60 880 160 888L155 865L192 900L155 920V908Q90 905 98 950Q125 990 185 960Q200 950 190 930Q205 920 213 940Q205 980 180 985M0 940Q10 960 0 980"/><ellipse cx="611" cy="785" rx="67" ry="51"/><path d="M583 755L637 768L620 778L640 800L627 808L605 785L597 797Z"/>
      <path d="M0 1105Q50 1110 65 1170M60 1130Q105 1130 112 1155Q100 1175 65 1170M60 1145Q95 1145 95 1158L70 1160M270 1170Q340 1155 410 1170M945 1170Q970 1150 995 1170M655 1168Q680 1145 705 1168"/>
      <path d="M45 1568Q45 1545 75 1545Q90 1530 135 1528Q180 1530 225 1545Q275 1550 275 1568M510 1530Q570 1590 635 1530M890 1530L910 1562Q940 1540 980 1545L985 1530M1120 1535L1150 1528M1525 1455Q1540 1410 1568 1395M1520 1490L1568 1492"/>
    </g>
    <g id="scatter"></g>
  </svg>

  <div class="thread">
    <article class="bubble sent">
      <div class="quote"><strong>Yoryani (pilas)</strong><span>Bien gracias a Dios</span></div>
      <p>Qué gusto saber eso!</p>
      <div class="meta"><time>6:32 p. m.</time><svg class="ticks read" role="img" aria-label="Leído"><use href="#ticks"/></svg></div>
    </article>
    <article class="bubble sent">
      <div class="quote"><strong>Yoryani (pilas)</strong><span>Y tú</span></div>
      <p>Estoy muy bien</p>
      <div class="meta"><time>6:32 p. m.</time><svg class="ticks read" role="img" aria-label="Leído"><use href="#ticks"/></svg></div>
    </article>
    <article class="bubble sent last">
      <p>¿Por qué no podríamos hablar en persona?</p>
      <div class="meta"><time>6:35 p. m.</time><svg class="ticks read" role="img" aria-label="Leído"><use href="#ticks"/></svg></div>
      <svg class="tail"><use href="#tail"/></svg>
    </article>
    <article class="bubble received">
      <div class="quote"><strong>Tú</strong><span>Qué gusto saber eso!</span></div>
      <p>Gacias</p>
      <div class="meta"><time>9:58 p. m.</time></div>
    </article>
    <article class="bubble received">
      <div class="quote"><strong>Tú</strong><span>Estoy muy bien</span></div>
      <p>Que bueno</p>
      <div class="meta"><time>9:58 p. m.</time></div>
    </article>
    <article class="bubble received last">
      <div class="quote"><strong>Tú</strong><span>¿Por qué no podríamos hablar en persona?</span></div>
      <p>No crees que es un poco rapido?</p>
      <div class="meta"><time>9:58 p. m.</time></div>
      <svg class="tail"><use href="#tail"/></svg>
    </article>
    <div class="day">Hoy</div>
    <article class="bubble sent">
      <p>Buen día!<br>¿como amaneció hoy?</p>
      <div class="meta"><time>7:53 a. m.</time><svg class="ticks" role="img" aria-label="Entregado"><use href="#ticks"/></svg></div>
      <svg class="tail"><use href="#tail"/></svg>
    </article>
  </div>
  <div class="scrollbar"></div>
</main>

<footer class="bottom">
  <form class="composer">
    <button type="button" aria-label="Adjuntar"><svg width="56" height="56" viewBox="0 0 56 56"><path d="M28 3V53M3 28H53" stroke="currentColor" stroke-width="5" stroke-linecap="round"/></svg></button>
    <div class="field">
      <input type="text" aria-label="Mensaje">
      <button type="button" aria-label="Stickers"><svg width="50" height="50" viewBox="143 84 151 151" fill="none" stroke="currentColor" stroke-width="11" stroke-linejoin="round"><path d="M200 92H242Q287 92 287 138V155Q287 172 275 184L243 216Q230 229 214 229H196Q150 229 150 184V140Q150 92 200 92ZM287 163Q278 168 262 168Q228 168 228 203Q228 220 222 229"/></svg></button>
    </div>
    <button type="button" class="camera" aria-label="Cámara"><svg width="60" height="52" viewBox="542 80 181 157" fill="none" stroke="currentColor" stroke-width="12" stroke-linejoin="round"><path d="M580 104Q594 104 599 98L608 90Q612 87 620 87H645Q653 87 657 90L667 98Q673 104 686 104Q717 106 717 136V200Q717 230 687 230H579Q549 230 549 200V136Q549 106 580 104Z"/><circle cx="633" cy="162" r="35"/></svg></button>
    <button type="button" aria-label="Mensaje de voz"><svg width="43" height="63" viewBox="887 59 128 188" fill="none" stroke="currentColor" stroke-width="12" stroke-linecap="round"><rect x="923" y="66" width="57" height="118" rx="28"/><path d="M893 156Q896 214 951 214T1009 156M951 214V240"/></svg></button>
  </form>
  <div class="home"></div>
</footer>
<script src="wallpaper.js"></script>
</body>
</html>
```
FILE: styles.css
```css
* { box-sizing: border-box; }

body {
  margin: 0;
  min-height: 100vh;
  display: flex;
  flex-direction: column;
  background: #000;
  color: #fff;
  font-family: Inter, "Liberation Sans", sans-serif;
}

h1, p { margin: 0; font-weight: 400; }
svg { display: block; flex: none; }
button {
  padding: 0;
  border: 0;
  background: none;
  color: #66a3f7;
  font: inherit;
}
.defs { position: absolute; width: 0; height: 0; }

/* Header */
.top {
  border-bottom: 1px solid #2a2a2a;
  background:
    linear-gradient(90deg, rgba(23, 23, 23, .6), transparent 14%),
    radial-gradient(ellipse 50% 110% at 38% 0, #303031, transparent),
    radial-gradient(ellipse 34% 130% at 16% 80%, #343436, transparent),
    #171717;
}
.status {
  display: flex;
  justify-content: space-between;
  align-items: center;
  height: 117px;
  padding: 6px 57px 0 107px;
}
.clock { font-size: 43px; font-weight: 600; }
.status-icons { display: flex; align-items: center; gap: 14px; }
.carrier { font-size: 31px; font-weight: 500; line-height: 34px; }

.nav { display: flex; align-items: center; height: 122px; padding: 0 87px 0 36px; }
.back { display: flex; align-items: center; gap: 28px; width: 160px; font-size: 46px; }
.avatar { width: 98px; height: 98px; }
.who { flex: 1; min-width: 0; margin-left: 28px; overflow: hidden; white-space: nowrap; }
.name { font-size: 42px; font-weight: 600; line-height: 48px; }
.hint { color: #929296; font-size: 32px; line-height: 38px; }
.calls { display: flex; align-items: center; gap: 67px; margin-left: 20px; }

/* Conversation */
.chat { position: relative; flex: 1; overflow: hidden; }
.wallpaper {
  position: absolute;
  inset: 0;
  width: 100%;
  height: 100%;
  fill: none;
  stroke: #262626;
  stroke-width: 3px;
  stroke-linejoin: round;
  stroke-linecap: round;
}
.wallpaper * { vector-effect: non-scaling-stroke; }
.thread {
  position: relative;
  display: flex;
  flex-direction: column;
  gap: 10px;
  padding: 24px 44px 19px;
}
.bubble {
  position: relative;
  max-width: calc(100% - 247px);
  padding: 15px 28px 20px;
  border-radius: 28px;
}
.bubble.last { margin-bottom: 22px; }
.sent { align-self: flex-end; background: #215046; color: #215046; }
.received { align-self: flex-start; background: #363638; color: #363638; }
.bubble p { color: #fff; font-size: 43px; line-height: 60px; }
.bubble p::after { content: ""; float: right; height: 47px; }
.sent p::after { width: 244px; }
.received p::after { width: 192px; }

.quote {
  display: flex;
  flex-direction: column;
  height: 163px;
  margin: -4px -17px 11px;
  padding: 25px 19px 0 36px;
  border-radius: 22px;
}
.quote strong { font-size: 40px; font-weight: 600; line-height: 54px; }
.quote span { font-size: 35px; line-height: 56px; white-space: nowrap; }
.sent .quote {
  background: linear-gradient(90deg, #f27b64 11px, #193b34 11px);
  color: #a3abab;
}
.sent .quote strong { color: #b35b48; }
.received .quote {
  background: linear-gradient(90deg, #b5e048 11px, #28282a 11px);
  color: #acacb3;
}
.received .quote strong { color: #8aa636; }

.meta {
  position: absolute;
  right: 27px;
  bottom: 13px;
  display: flex;
  align-items: center;
  gap: 10px;
  color: #91aaa5;
  font-size: 33px;
  line-height: 40px;
}
.received .meta { color: #9b9ba3; right: 28px; }
.ticks { width: 42px; height: 28px; color: #71958e; }
.ticks.read { color: #569ff6; }

.tail { position: absolute; right: -16px; bottom: 0; width: 32px; height: 32px; }
.received .tail { right: auto; left: -16px; transform: scaleX(-1); }

.day {
  align-self: center;
  margin: 64px 0 25px;
  padding: 0 102px;
  border-radius: 22px;
  background: #1e1e1f;
  color: #a9a9ad;
  font-size: 34px;
  font-weight: 600;
  line-height: 54px;
}
.scrollbar {
  position: absolute;
  right: 8px;
  bottom: 9px;
  width: 8px;
  height: 46%;
  border-radius: 4px;
  background: rgba(255, 255, 255, .35);
}

/* Composer */
.bottom {
  padding: 19px 0 23px;
  border-top: 1px solid #2e2e2e;
  background: #171717;
}
.composer { display: flex; align-items: center; padding: 0 47px 0 35px; }
.camera { margin: 0 55px 0 51px; }
.field {
  display: flex;
  flex: 1;
  align-items: center;
  min-width: 0;
  height: 82px;
  margin-left: 36px;
  padding: 0 31px 0 40px;
  border: 1px solid #454547;
  border-radius: 41px;
  background: #2c2c2e;
}
.field input {
  flex: 1;
  min-width: 0;
  border: 0;
  outline: 0;
  background: none;
  color: #fff;
  font: inherit;
  font-size: 43px;
}
.home {
  width: 404px;
  height: 16px;
  margin: 73px auto 0;
  border-bottom: 1px solid #fff;
  border-radius: 8px;
  background: #777;
}
```
FILE: wallpaper.js
```js
// Scatters the rings, stars and sparkles between the larger doodles.
// Each tile maps its own 1568-unit square onto part of the wallpaper.
const tiles = [
  { x: 0, y: 240, w: 562, h: 760,
    rings: [[800,18,15],[685,142,28],[826,131,15],[930,172,30],[628,216,19],[803,298,13],[487,321,35],[768,358,27],[870,357,13],[93,366,14],[385,356,14],[20,414,20],[135,414,26],[456,404,20],[236,433,16],[166,455,20],[521,460,18],[124,540,16],[400,620,20],[460,625,18],[820,694,20],[757,713,14],[262,849,14],[490,951,14],[655,946,15],[713,944,9],[789,965,31],[865,926,13],[911,893,16],[961,904,8],[1042,928,19],[1137,914,23],[1185,962,14],[1101,982,20],[1170,1002,14],[1065,1039,13],[262,996,14],[357,996,14],[425,1002,32],[684,1025,27],[767,1052,14],[833,1037,13],[1084,1121,13],[803,1136,21],[802,1183,12],[211,1204,16],[573,1282,13],[548,1317,13],[638,1301,16],[769,1288,17],[229,1331,27],[367,1371,17],[463,1367,16],[578,1362,21],[282,1388,14],[324,1409,13],[1325,640,18]],
    stars: [[333,395,54,8],[664,437,56,12],[1043,834,68,4],[172,919,50,14],[346,1084,50,0]],
    sparkles: [[133,1256,66,-15],[172,1427,46,-10]] },
  { x: 562, y: 240, w: 563, h: 760,
    rings: [[1312,5,20],[1481,47,14],[1485,95,17],[1323,45,13],[1549,140,12],[1498,242,13],[1497,529,29],[1565,546,12],[1120,608,22],[1450,358,10],[1459,1178,16],[1481,1468,16],[122,1175,14],[178,1177,17],[348,1182,12]],
    stars: [[1503,650,78,0]], sparkles: [[425,5,50,0]] },
  { x: 0, y: 960, w: 562, h: 640,
    rings: [[986,22,20],[1039,64,15],[1092,75,16],[1391,32,20],[1473,139,27],[1560,122,14],[1419,187,15],[1451,230,21],[1511,228,6],[1560,303,10],[1342,436,22],[107,513,16],[40,712,20],[73,802,15],[73,940,17],[72,1091,15],[311,768,13],[1247,764,12],[1542,709,16],[1510,762,22],[1448,1062,8],[1510,1101,25],[1493,1147,14],[1461,1196,16],[1536,1181,16],[0,1225,8],[1522,485,6],[1484,512,5],[1478,554,5],[1508,582,5],[1552,586,5],[1565,492,4]],
    stars: [], sparkles: [[672,58,58,0],[1556,1260,40,0]] },
  { x: 562, y: 960, w: 563, h: 640,
    rings: [[47,65,14],[112,46,26],[191,31,12],[22,187,15],[59,265,23],[66,337,19],[376,377,17],[596,300,20],[1023,250,18],[1063,309,25],[1142,296,14],[1026,367,16],[1116,363,14],[1035,418,17],[1039,486,21],[1322,271,14],[1308,317,23],[1098,524,11],[1213,577,24],[1290,581,29],[1376,562,19],[1381,612,11],[1324,644,15],[1242,650,11],[164,470,12],[207,522,16],[243,604,28],[298,591,15],[285,648,16],[516,584,15],[552,609,18],[878,628,15],[971,625,16],[944,671,11],[889,699,12],[922,766,22],[303,814,12],[220,854,21],[169,928,12],[231,978,16],[479,971,16],[526,1004,14],[604,1000,23],[581,936,17],[1047,973,14],[853,1104,14],[912,1107,16],[678,1186,14],[706,1242,16],[760,1302,29],[279,1236,26],[297,1308,16],[468,1320,17],[460,1376,14],[375,1382,17],[22,1401,14],[404,1437,25],[757,1406,14],[1348,1341,17],[1421,1325,27],[1505,908,15],[1508,848,10],[1560,903,10],[1343,1441,16],[1388,1427,16],[1360,1483,16],[1406,1468,16],[1558,826,16],[1560,1021,12],[1556,1242,14],[1563,1289,14],[1527,1491,12],[1565,645,12],[20,518,5],[20,562,5],[1163,1104,2],[1178,1105,2],[1323,1074,2],[1334,1066,2],[1196,1058,9],[1290,1036,9],[626,678,2],[636,680,2]],
    stars: [[1490,577,54,6],[397,599,66,12],[335,937,82,18]],
    sparkles: [[922,520,56,40],[773,1153,56,8],[1535,1387,48,0]] },
  { x: 0, y: 1540, w: 562, h: 680,
    rings: [[14,155,17],[91,165,16],[84,398,18],[15,607,14],[13,674,12],[55,712,22],[103,632,26],[278,866,20],[216,924,11],[311,939,23],[249,966,14],[380,968,13],[42,1052,25],[295,1038,13],[429,1068,28],[557,1070,18],[123,1127,19],[266,1123,18],[353,1121,27],[486,1126,11],[423,1170,22],[370,1221,17],[613,1180,21],[620,1269,18],[665,1305,18],[386,1295,27],[302,1306,13],[245,1318,15],[107,1322,19],[440,1331,15],[521,1332,20],[72,1394,16],[167,1385,15],[447,1391,26],[382,1408,15],[888,1362,15],[795,992,18],[793,1055,18],[880,1089,15],[976,1083,25],[833,1131,13],[940,1144,16],[1046,1141,12],[1164,1150,13],[1282,1130,18],[1362,1104,26],[1234,782,15],[1290,834,22],[48,1512,17],[161,1515,31],[391,1511,16],[575,1483,15],[711,1504,22],[631,1545,18],[809,1525,17],[900,1540,15],[661,752,20],[728,745,14],[327,748,14],[1564,775,10],[1565,843,6]],
    stars: [[188,1048,58,2],[525,1228,56,10],[1123,1080,56,10]],
    sparkles: [[224,790,56,10],[1158,830,56,8],[770,1350,50,22]] },
  { x: 562, y: 1540, w: 563, h: 680,
    rings: [[916,84,20],[932,159,12],[929,217,15],[990,214,16],[993,270,13],[1276,286,15],[1006,424,14],[967,460,16],[1067,453,20],[1112,442,14],[957,510,15],[1002,678,14],[1038,716,18],[1187,726,17],[1377,565,15],[1290,600,29],[1233,632,21],[1381,631,12],[1508,620,12],[1478,165,12],[1512,122,18],[484,765,15],[430,781,20],[290,800,16],[350,816,14],[245,866,27],[315,896,22],[285,942,14],[91,842,20],[35,904,15],[10,841,13],[20,775,31],[693,942,29],[440,1006,23],[526,1034,16],[483,1071,13],[611,1027,12],[602,1089,17],[432,1117,13],[337,1109,20],[262,1114,24],[162,1126,29],[105,1097,11],[940,943,16],[851,990,15],[922,1011,19],[885,1052,15],[915,1110,17],[1013,1090,22],[1087,1103,14],[1240,1093,26],[1332,1095,16],[1167,1131,22],[1027,1154,11],[793,1151,12],[1344,930,23],[1371,983,17],[1422,1065,32],[1489,1345,15],[1506,1388,16],[1521,1311,15],[1552,809,13],[748,1053,12],[696,1021,7],[787,1010,7],[708,1096,7],[799,1087,7],[341,1556,27],[785,1557,17],[678,1556,13],[455,1537,13],[1238,1542,13],[1370,1538,26],[1455,1420,10],[1510,1540,20],[1042,1562,12]],
    stars: [[1118,798,54,0]], sparkles: [[525,1158,56,0]] }
];

const scatter = document.getElementById('scatter');
const NS = 'http://www.w3.org/2000/svg';

function add(name, attrs) {
  const el = document.createElementNS(NS, name);
  for (const key in attrs) el.setAttribute(key, attrs[key]);
  scatter.appendChild(el);
}

function spiked(cx, cy, points, outer, inner, turn) {
  let d = '';
  for (let i = 0; i < points * 2; i++) {
    const r = i % 2 ? inner : outer;
    const a = (turn - 90) * Math.PI / 180 + i * Math.PI / points;
    d += (i ? 'L' : 'M') + (cx + r * Math.cos(a)).toFixed(1) + ' ' + (cy + r * Math.sin(a)).toFixed(1);
  }
  return d + 'Z';
}

for (const t of tiles) {
  const sx = t.w / 1568, sy = t.h / 1568;
  for (const [x, y, r] of t.rings) add('circle', { cx: t.x + x * sx, cy: t.y + y * sy, r: r * sx });
  for (const [x, y, r, a] of t.stars) add('path', { d: spiked(t.x + x * sx, t.y + y * sy, 5, r * sx, r * sx * .5, a) });
  for (const [x, y, r, a] of t.sparkles) add('path', { d: spiked(t.x + x * sx, t.y + y * sy, 4, r * sx, r * sx * .28, a) });
}
```
